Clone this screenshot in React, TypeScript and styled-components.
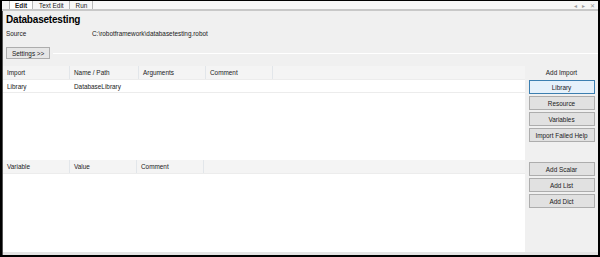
import React from "react";
import styled, { createGlobalStyle } from "styled-components";

const GlobalStyle = createGlobalStyle`
  html, body {
    margin: 0;
    padding: 0;
    background: #ffffff;
  }
  * {
    box-sizing: border-box;
  }
`;

type Column = { label: string; width: number };

const importColumns: Column[] = [
  { label: "Import", width: 67 },
  { label: "Name / Path", width: 69 },
  { label: "Arguments", width: 67 },
  { label: "Comment", width: 67 },
];

const variableColumns: Column[] = [
  { label: "Variable", width: 67 },
  { label: "Value", width: 67 },
  { label: "Comment", width: 67 },
];

const App: React.FC = () => {
  return (
    <>
      <GlobalStyle />
      <Frame>
        <TabBar>
          <Tab $active>Edit</Tab>
          <Tab>Text Edit</Tab>
          <Tab>Run</Tab>
          <TabTools>
            <span>◂</span>
            <span>▸</span>
            <span>✕</span>
          </TabTools>
        </TabBar>
        <Body>
          <Header>
            <Title>Databasetesting</Title>
            <SourceRow>
              <SourceLabel>Source</SourceLabel>
              <span>C:\robotframework\databasetesting.robot</span>
            </SourceRow>
            <SettingsRow>
              <SmallButton>Settings &gt;&gt;</SmallButton>
              <Rule />
            </SettingsRow>
          </Header>

          <Section $height={94}>
            <Table>
              <HeadRow>
                {importColumns.map((c) => (
                  <HeadCell key={c.label} style={{ width: c.width }}>
                    {c.label}
                  </HeadCell>
                ))}
              </HeadRow>
              <DataRow>
                <Cell style={{ width: 67 }}>Library</Cell>
                <Cell style={{ width: 69 }}>DatabaseLibrary</Cell>
              </DataRow>
            </Table>
            <Side>
              <SideLabel>Add Import</SideLabel>
              <SideButton $focused>Library</SideButton>
              <SideButton>Resource</SideButton>
              <SideButton>Variables</SideButton>
              <SideButton>Import Failed Help</SideButton>
            </Side>
          </Section>

          <Section>
            <Table>
              <HeadRow>
                {variableColumns.map((c) => (
                  <HeadCell key={c.label} style={{ width: c.width }}>
                    {c.label}
                  </HeadCell>
                ))}
              </HeadRow>
            </Table>
            <Side $top={2}>
              <SideButton>Add Scalar</SideButton>
              <SideButton>Add List</SideButton>
              <SideButton>Add Dict</SideButton>
            </Side>
          </Section>
          <BottomStrip />
        </Body>
      </Frame>
    </>
  );
};

export default App;

/* ----- styles ----- */
const Frame = styled.div`
  width: 600px;
  height: 257px;
  display: flex;
  flex-direction: column;
  border-top: 1px solid #000;
  border-left: 2px solid #000;
  border-right: 2px solid #000;
  border-bottom: 2px solid #000;
  background: #f0f0f0;
  font-family: "Liberation Sans", Arial, sans-serif;
  font-size: 6.4px;
  color: #1a1a1a;
  overflow: hidden;
`;

const TabBar = styled.div`
  height: 10px;
  display: flex;
  align-items: stretch;
  padding-left: 7px;
  background: #f7f7f7;
  border-bottom: 2px solid #c8c8c8;
`;

const Tab = styled.div<{ $active?: boolean }>`
  display: flex;
  align-items: center;
  padding: 0 5px;
  background: ${({ $active }) => ($active ? "#ffffff" : "transparent")};
  border-right: 1px solid #b8b8b8;
  border-left: ${({ $active }) => ($active ? "1px solid #b8b8b8" : "none")};
  font-weight: ${({ $active }) => ($active ? "bold" : "normal")};
  color: #222;
  margin-right: 1px;
`;

const TabTools = styled.div`
  margin-left: auto;
  display: flex;
  align-items: center;
  gap: 5px;
  padding-right: 3px;
  color: #9a9a9a;
  font-size: 6px;
`;

const Body = styled.div`
  flex: 1;
  display: flex;
  flex-direction: column;
  border-left: 1px solid #555;
  min-height: 0;
`;

const Header = styled.div`
  display: flex;
  flex-direction: column;
  padding: 3px 0 2px 3px;
  background: #f0f0f0;
  height: 55px;
`;

const Title = styled.div`
  font-size: 10px;
  font-weight: bold;
  color: #000;
  letter-spacing: -0.2px;
  line-height: 12px;
`;

const SourceRow = styled.div`
  display: flex;
  margin-top: 3px;
  line-height: 9px;
`;

const SourceLabel = styled.span`
  width: 86px;
`;

const SettingsRow = styled.div`
  display: flex;
  align-items: center;
  margin-top: 9px;
`;

const SmallButton = styled.div`
  height: 12px;
  padding: 0 5px;
  display: flex;
  align-items: center;
  background: #e6e6e6;
  border: 1px solid #adadad;
`;

const Rule = styled.div`
  flex: 1;
  height: 1px;
  background: #bdbdbd;
  margin-left: 3px;
  border-bottom: 1px solid #fff;
`;

const Section = styled.div<{ $height?: number }>`
  display: flex;
  ${({ $height }) => ($height ? `height: ${$height}px;` : "flex: 1;")}
`;

const Table = styled.div`
  flex: 1;
  background: #ffffff;
  display: flex;
  flex-direction: column;
`;

const HeadRow = styled.div`
  display: flex;
  height: 14px;
  background: #f4f4f4;
  border-bottom: 1px solid #ececec;
`;

const HeadCell = styled.div`
  display: flex;
  align-items: center;
  padding-left: 4px;
  border-right: 1px solid #e2e6ea;
`;

const DataRow = styled.div`
  display: flex;
  height: 13px;
  border-bottom: 1px solid #ececec;
`;

const Cell = styled.div`
  display: flex;
  align-items: center;
  padding-left: 4px;
`;

const Side = styled.div<{ $top?: number }>`
  width: 73px;
  display: flex;
  flex-direction: column;
  align-items: center;
  gap: 2px;
  padding-top: ${({ $top }) => $top ?? 0}px;
  background: #f0f0f0;
`;

const SideLabel = styled.div`
  height: 12px;
  display: flex;
  align-items: center;
`;

const SideButton = styled.div<{ $focused?: boolean }>`
  width: 66px;
  height: 14px;
  display: flex;
  align-items: center;
  justify-content: center;
  background: ${({ $focused }) => ($focused ? "#e5f1fb" : "#e1e1e1")};
  border: 1px solid ${({ $focused }) => ($focused ? "#3c7fb1" : "#adadad")};
`;

const BottomStrip = styled.div`
  height: 3px;
  background: #e4e4e4;
`;
